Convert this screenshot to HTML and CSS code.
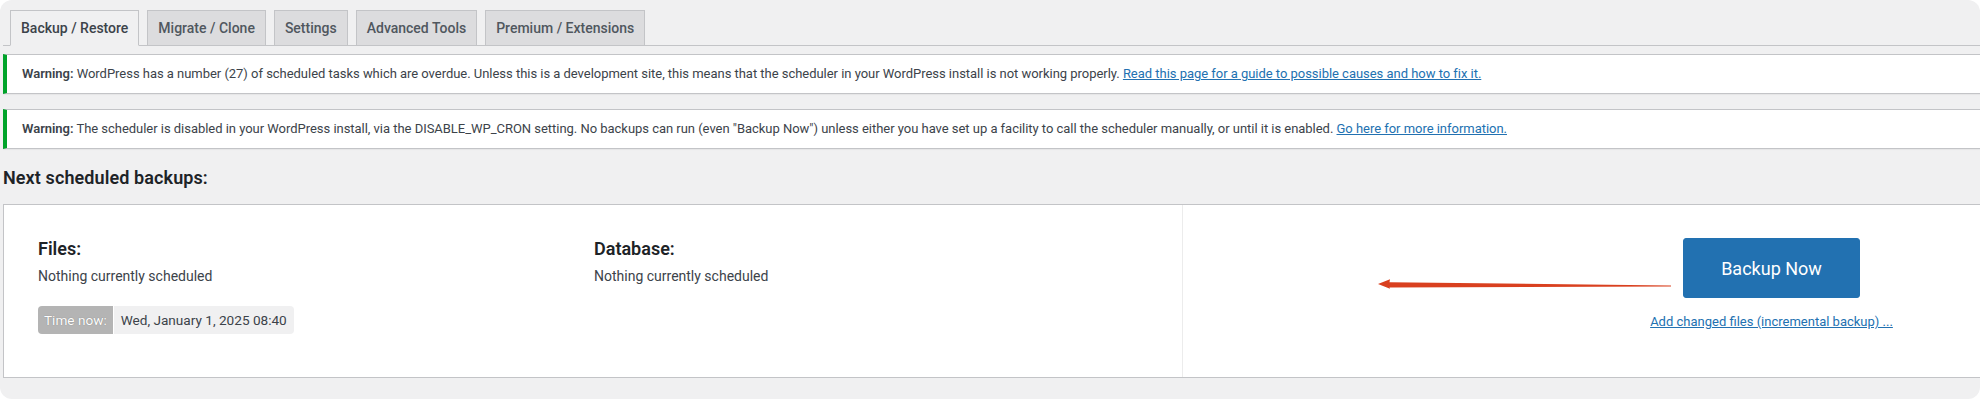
FILE: index.html
```html
<!DOCTYPE html>
<html lang="en">
<head>
<meta charset="utf-8">
<title>UpdraftPlus - Backup / Restore</title>
<link rel="stylesheet" href="styles.css">
</head>
<body>
<div class="page">
  <nav class="tabs">
    <a class="tab active" href="#">Backup / Restore</a>
    <a class="tab" href="#">Migrate / Clone</a>
    <a class="tab" href="#">Settings</a>
    <a class="tab" href="#">Advanced Tools</a>
    <a class="tab" href="#">Premium / Extensions</a>
  </nav>

  <div class="notice">
    <p><strong>Warning:</strong> WordPress has a number (27) of scheduled tasks which are overdue. Unless this is a development site, this means that the scheduler in your WordPress install is not working properly. <a href="#">Read this page for a guide to possible causes and how to fix it.</a></p>
  </div>
  <div class="notice notice-second">
    <p><strong>Warning:</strong> The scheduler is disabled in your WordPress install, via the DISABLE_WP_CRON setting. No backups can run (even &quot;Backup Now&quot;) unless either you have set up a facility to call the scheduler manually, or until it is enabled. <a href="#">Go here for more information.</a></p>
  </div>

  <h2 class="section-title">Next scheduled backups:</h2>

  <div class="schedule">
    <div class="schedule-info">
      <div class="schedule-cols">
        <div class="sched-col">
          <h3 class="sched-title">Files:</h3>
          <p class="sched-text">Nothing currently scheduled</p>
        </div>
        <div class="sched-col">
          <h3 class="sched-title">Database:</h3>
          <p class="sched-text">Nothing currently scheduled</p>
        </div>
      </div>
      <div class="time-now"><span class="time-label">Time now:</span><span class="time-value">Wed, January 1, 2025 08:40</span></div>
    </div>
    <div class="schedule-actions">
      <button class="btn-primary" type="button">Backup Now</button>
      <a class="incremental" href="#">Add changed files (incremental backup) ...</a>
    </div>
  </div>

  <svg class="arrow" width="310" height="20" viewBox="0 0 310 20" aria-hidden="true">
    <polygon points="8,8 20,3.3 19.5,6.2 301,9.4 301,10.6 19.5,11.4 20,12.8" fill="#d9401f"/>
  </svg>
</div>
</body>
</html>
```

FILE: styles.css
```css
* { box-sizing: border-box; }

html, body {
  margin: 0;
  padding: 0;
  background: #ffffff;
}

body {
  font-family: Roboto, "Liberation Sans", sans-serif;
  color: #3c434a;
  font-size: 13px;
}

.page {
  position: relative;
  width: 1980px;
  height: 399px;
  overflow: hidden;
  background: #f0f0f1;
  border-radius: 12px;
  padding-left: 3px;
}

/* tabs */
.tabs {
  display: flex;
  gap: 8px;
  padding: 10px 0 0 7px;
  border-bottom: 1px solid #c3c4c7;
}

.tab {
  display: block;
  margin-bottom: -1px;
  padding: 5px 10px;
  font-size: 14px;
  line-height: 24px;
  font-weight: 500;
  color: #50575e;
  text-decoration: none;
  background: #dcdcde;
  border: 1px solid #c3c4c7;
}

.tab.active {
  background: #f0f0f1;
  color: #3c434a;
  border-bottom-color: #f0f0f1;
}

/* notices */
.notice {
  margin-top: 8px;
  background: #ffffff;
  border: 1px solid #c3c4c7;
  border-left: 4px solid #00a32a;
  border-right: 0;
  padding: 9px 15px;
  box-shadow: 0 1px 1px rgba(0, 0, 0, 0.04);
}

.notice-second {
  margin-top: 15px;
}

.notice p {
  margin: 0;
  line-height: 20px;
  font-size: 13px;
  white-space: nowrap;
  letter-spacing: -0.03px;
}

.notice strong {
  font-weight: 600;
}

.notice a,
.incremental {
  color: #2271b1;
  text-decoration: underline;
}

/* heading */
.section-title {
  margin: 17px 0 0;
  font-size: 18px;
  line-height: 24px;
  font-weight: 600;
  color: #1d2327;
  letter-spacing: 0.1px;
}

/* schedule box */
.schedule {
  display: flex;
  width: 2359px;
  margin-top: 14px;
  background: #ffffff;
  border: 1px solid #c3c4c7;
}

.schedule-info {
  flex: 0 0 1178px;
  padding: 32px 0 43px 34px;
}

.schedule-cols {
  display: flex;
}

.sched-col {
  flex: 0 0 556px;
}

.sched-title {
  margin: 0;
  font-size: 18px;
  line-height: 24px;
  font-weight: 600;
  color: #1d2327;
}

.sched-text {
  margin: 5px 0 0;
  line-height: 20px;
  font-size: 14px;
}

.time-now {
  display: inline-flex;
  margin-top: 20px;
  border-radius: 4px;
  overflow: hidden;
  font-size: 13.6px;
  line-height: 28px;
}

.time-label {
  padding: 0 6px;
  background: #b4b4b4;
  color: #ffffff;
  text-shadow: 0 0 1px rgba(0, 0, 0, 0.35);
  border-right: 1px solid #ffffff;
}

.time-value {
  padding: 0 7px;
  background: #f0f0f1;
  color: #3c434a;
}

.schedule-actions {
  flex: 0 0 1178px;
  display: flex;
  flex-direction: column;
  align-items: center;
  padding-top: 33px;
  border-left: 1px solid #ececec;
}

.btn-primary {
  height: 60px;
  padding: 0 37px;
  font-family: inherit;
  font-size: 18px;
  color: #ffffff;
  background: #2271b1;
  border: 1px solid #2271b1;
  border-radius: 3px;
  cursor: pointer;
}

.incremental {
  margin-top: 14px;
  font-size: 13px;
  line-height: 20px;
}

/* annotation arrow */
.arrow {
  position: absolute;
  left: 1370px;
  top: 276px;
}
```
